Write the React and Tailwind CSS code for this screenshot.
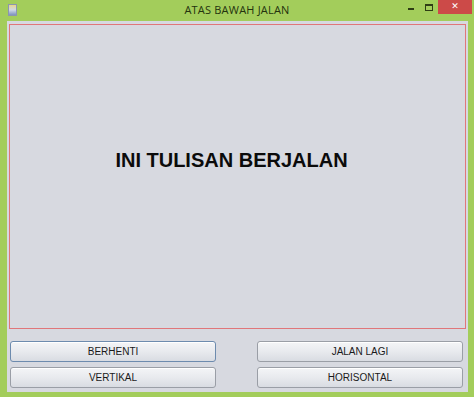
import React from 'react';

function WinButton({ label, focused }) {
    return (
        <button
            className={`h-[21px] w-full rounded-[3px] border ${focused ? 'border-[#6d8bae]' : 'border-[#9a9ea6]'} bg-gradient-to-b from-[#f4f5f7] via-[#e8eaee] to-[#d9dce2] text-[10px] text-[#1a1a1a] shadow-[inset_0_1px_0_#ffffff]`}
            style={{ fontFamily: '"Liberation Sans", Arial, sans-serif' }}
        >
            {label}
        </button>
    );
}

export default function App() {
    return (
        <div className="w-[474px] h-[397px] bg-[#a3cd5b] flex flex-col overflow-hidden">
            {/* title bar */}
            <div className="relative h-[21px] flex items-center justify-center">
                <div className="absolute left-[8px] top-[4px] w-[9px] h-[12px] bg-gradient-to-b from-[#e9d48a] via-[#cfd8e6] to-[#7f93c0] border border-[#8b96b0]"></div>
                <span className="text-[11px] text-[#24330e] tracking-[0.2px]" style={{ fontFamily: '"Open Sans", "Noto Sans", sans-serif' }}>
                    ATAS BAWAH JALAN
                </span>
                <div className="absolute right-[2px] top-0 flex items-start">
                    <div className="w-[18px] h-[14px] flex items-center justify-center">
                        <div className="w-[6px] h-[2px] bg-[#2e3d14] mt-[4px]"></div>
                    </div>
                    <div className="w-[18px] h-[14px] flex items-center justify-center">
                        <div className="w-[8px] h-[7px] border border-[#2e3d14] border-t-2"></div>
                    </div>
                    <div className="w-[34px] h-[14px] bg-[#cc4a48] flex items-center justify-center text-white text-[9px] font-bold" style={{ fontFamily: '"DejaVu Sans", sans-serif' }}>
                        ✕
                    </div>
                </div>
            </div>

            {/* client area */}
            <div className="mx-[7px] mr-[6px] mb-[5px] flex-1 bg-[#d7d9e0] flex flex-col px-[2px] pt-[3px] pb-[4px]">
                <div className="flex-1 border border-[#e0767a] flex items-center justify-center pb-[34px] pr-[12px]">
                    <span className="text-[20px] font-bold text-[#0b0b0b]" style={{ fontFamily: '"Liberation Sans", Arial, sans-serif' }}>
                        INI TULISAN BERJALAN
                    </span>
                </div>
                <div className="grid grid-cols-2 gap-x-[41px] gap-y-[5px] mt-[12px] pl-[1px] pr-[3px]">
                    <WinButton label="BERHENTI" focused />
                    <WinButton label="JALAN LAGI" />
                    <WinButton label="VERTIKAL" />
                    <WinButton label="HORISONTAL" />
                </div>
            </div>
        </div>
    );
}
